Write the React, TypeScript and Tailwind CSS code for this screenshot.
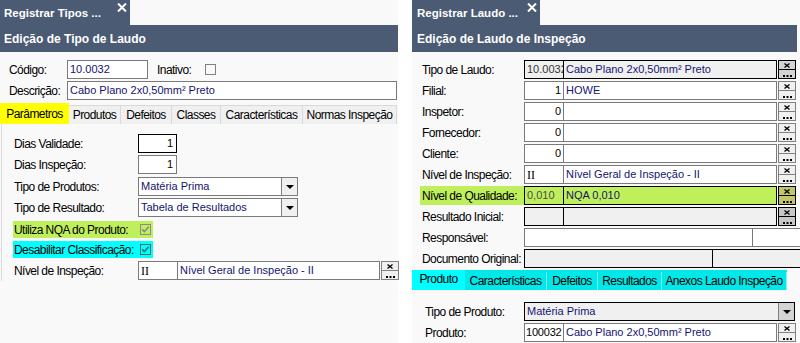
import React from "react";

const LBL = "font-['Liberation_Sans',Arial,sans-serif] text-[12px] tracking-[-0.55px] leading-none text-black whitespace-nowrap";
const VAL = "font-['Liberation_Sans',Arial,sans-serif] text-[11px] leading-none whitespace-nowrap";
const NAVY = "text-[#14146e]";

const CloseX = () => (
  <svg width="10" height="9" viewBox="0 0 10 9" className="mt-[3px] ml-auto mr-[3px] shrink-0">
    <path d="M1 0.5L9 8.5M9 0.5L1 8.5" stroke="#fff" strokeWidth="2" />
  </svg>
);

type BtnProps = { bg?: string; border?: string };

const XBtn = ({ bg = "bg-[#f0f0f0]", border = "border-[#808080]" }: BtnProps) => (
  <div className={`ml-px h-[19px] w-[18px] shrink-0 flex flex-col border ${border} ${bg}`}>
    <div className={`h-[9px] flex items-center justify-center border-b ${border}`}>
      <svg width="6" height="5" viewBox="0 0 6 5">
        <path d="M0.5 0.5L5.5 4.5M5.5 0.5L0.5 4.5" stroke="#000" strokeWidth="1.3" />
      </svg>
    </div>
    <div className="flex-1 flex items-end justify-center pb-[1px]">
      <svg width="9" height="2" viewBox="0 0 9 2">
        <rect x="0" y="0" width="2" height="2" fill="#000" />
        <rect x="3.5" y="0" width="2" height="2" fill="#000" />
        <rect x="7" y="0" width="2" height="2" fill="#000" />
      </svg>
    </div>
  </div>
);

const DropBtn = ({ bg = "bg-[#f0f0f0]" }: { bg?: string }) => (
  <div className={`ml-auto h-full w-[16px] shrink-0 border-l border-[#808080] flex items-center justify-center ${bg}`}>
    <svg width="8" height="4" viewBox="0 0 8 4">
      <path d="M0 0H8L4 4Z" fill="#000" />
    </svg>
  </div>
);

type CheckProps = { checked?: boolean; border: string; mark?: string };

const Check = ({ checked, border, mark = "#808080" }: CheckProps) => (
  <div className={`w-[11px] h-[11px] shrink-0 border ${border} flex items-center justify-center`}>
    {checked && (
      <svg width="9" height="9" viewBox="0 0 9 9">
        <path d="M1.2 4.3L3.4 6.6L7.8 1.8" stroke={mark} strokeWidth="1.7" fill="none" />
      </svg>
    )}
  </div>
);

const LeftTabs = [
  { t: "Parâmetros", w: "w-[69px]" },
  { t: "Produtos", w: "w-[52px]" },
  { t: "Defeitos", w: "w-[51px]" },
  { t: "Classes", w: "w-[49px]" },
  { t: "Características", w: "w-[82px]" },
  { t: "Normas Inspeção", w: "w-[94px]" },
];

const RightTabs = [
  { t: "Produto", w: "w-[53px]" },
  { t: "Características", w: "w-[82px]" },
  { t: "Defeitos", w: "w-[51px]" },
  { t: "Resultados", w: "w-[64px]" },
  { t: "Anexos Laudo Inspeção", w: "w-[125px]" },
];

const LeftPanel = () => (
  <div className="w-[398px] h-full bg-[#f9f9f9] shrink-0">
    <div className="flex h-[25px]">
      <div className="w-[130px] bg-[#4b5b74] flex pl-[4px] text-white">
        <span className="mt-[8px] font-['Liberation_Sans',Arial,sans-serif] font-bold text-[11.5px] leading-none">Registrar Tipos ...</span>
        <CloseX />
      </div>
    </div>
    <div className="h-[27px] bg-[#4b5b74] flex items-center pl-[4px] text-white font-['Liberation_Sans',Arial,sans-serif] font-bold text-[12px]">
      Edição de Tipo de Laudo
    </div>

    <div className="pt-[8px] pl-[9px]">
      <div className="flex items-center h-[19px]">
        <span className={`${LBL} w-[58px] shrink-0`}>Código:</span>
        <div className={`w-[81px] h-[19px] border border-[#7a7a7a] bg-white flex items-center px-[2px] ${VAL} ${NAVY}`}>10.0032</div>
        <span className={`${LBL} ml-[9px] w-[48px] shrink-0`}>Inativo:</span>
        <Check border="border-[#808080]" />
      </div>
      <div className="flex items-center h-[19px] mt-[2px]">
        <span className={`${LBL} w-[58px] shrink-0`}>Descrição:</span>
        <div className={`w-[330px] h-[19px] border border-[#7a7a7a] bg-white flex items-center px-[2px] ${VAL} ${NAVY}`}>Cabo Plano 2x0,50mm² Preto</div>
      </div>
    </div>

    <div className="flex items-end h-[21px] mt-[3px]">
      {LeftTabs.map((tb, i) => (
        <div
          key={tb.t}
          className={`${tb.w} shrink-0 flex items-center justify-center ${LBL} ${
            i === 0 ? "h-[21px] bg-[#ffff00]" : "h-[19px] bg-[#f0f0f0] border-t border-r border-[#d9d9d9]"
          }`}
        >
          {tb.t}
        </div>
      ))}
    </div>

    <div className="ml-[1px] border-l border-[#dcdcdc] h-[157px] pt-[10px] pl-[12px]">
      <div className="flex items-center h-[19px]">
        <span className={`${LBL} w-[124px] shrink-0`}>Dias Validade:</span>
        <div className={`w-[39px] h-[19px] border border-black bg-white flex items-center justify-end px-[3px] ${VAL}`}>1</div>
      </div>
      <div className="flex items-center h-[19px] mt-[2px]">
        <span className={`${LBL} w-[124px] shrink-0`}>Dias Inspeção:</span>
        <div className={`w-[39px] h-[19px] border border-[#7a7a7a] bg-white flex items-center justify-end px-[3px] ${VAL}`}>1</div>
      </div>
      <div className="flex items-center h-[19px] mt-[3px]">
        <span className={`${LBL} w-[124px] shrink-0`}>Tipo de Produtos:</span>
        <div className={`w-[160px] h-[19px] border border-[#7a7a7a] bg-white flex items-center pl-[2px] ${VAL} ${NAVY}`}>
          Matéria Prima
          <DropBtn />
        </div>
      </div>
      <div className="flex items-center h-[19px] mt-[2px]">
        <span className={`${LBL} w-[124px] shrink-0`}>Tipo de Resultado:</span>
        <div className={`w-[160px] h-[19px] border border-[#7a7a7a] bg-white flex items-center pl-[2px] ${VAL} ${NAVY}`}>
          Tabela de Resultados
          <DropBtn />
        </div>
      </div>
      <div className="flex items-center w-[140px] h-[17px] mt-[4px] -ml-[1px] pl-[1px] pr-[2px] bg-[#bff05c]">
        <span className={LBL}>Utiliza NQA do Produto:</span>
        <div className="ml-auto"><Check checked border="border-[#8a8a8a]" mark="#8a8a8a" /></div>
      </div>
      <div className="flex items-center w-[140px] h-[17px] mt-[3px] -ml-[1px] pl-[1px] pr-[2px] bg-[#00ffff]">
        <span className={LBL}>Desabilitar Classificação:</span>
        <div className="ml-auto"><Check checked border="border-[#3a6a6a]" mark="#1f7f7f" /></div>
      </div>
      <div className="flex items-center h-[19px] mt-[3px]">
        <span className={`${LBL} w-[124px] shrink-0`}>Nível de Inspeção:</span>
        <div className="w-[40px] h-[19px] shrink-0 border border-[#7a7a7a] bg-white flex items-center px-[2px] font-['Liberation_Serif',serif] text-[12px] leading-none">II</div>
        <div className={`w-[202px] h-[19px] shrink-0 border border-l-0 border-[#7a7a7a] bg-white flex items-center px-[2px] ${VAL} ${NAVY}`}>Nível Geral de Inspeção - II</div>
        <XBtn />
      </div>
    </div>
  </div>
);

type RowProps = { label: string; children: React.ReactNode; className?: string; labelBg?: string };

const Row = ({ label, children, className = "mt-[2px]", labelBg = "" }: RowProps) => (
  <div className={`flex items-center h-[19px] ${className}`}>
    <div className={`w-[104px] shrink-0 h-[19px] -ml-[2px] pl-[2px] flex items-center ${labelBg}`}>
      <span className={LBL}>{label}</span>
    </div>
    {children}
  </div>
);

type BoxProps = { w: string; cls?: string; children?: React.ReactNode; right?: boolean; first?: boolean };

const Box = ({ w, cls = "bg-white border-[#7a7a7a]", children, right, first }: BoxProps) => (
  <div className={`${w} h-[19px] shrink-0 border ${first ? "" : "border-l-0"} ${cls} flex items-center px-[2px] overflow-hidden ${right ? "justify-end" : ""} ${VAL}`}>
    {children}
  </div>
);

const RightPanel = () => (
  <div className="w-[388px] h-full bg-[#f9f9f9] shrink-0 overflow-hidden">
    <div className="flex h-[25px]">
      <div className="w-[128px] bg-[#4b5b74] flex pl-[5px] text-white">
        <span className="mt-[8px] font-['Liberation_Sans',Arial,sans-serif] font-bold text-[11.5px] leading-none">Registrar Laudo ...</span>
        <CloseX />
      </div>
    </div>
    <div className="h-[27px] w-[385px] bg-[#4b5b74] flex items-center pl-[5px] text-white font-['Liberation_Sans',Arial,sans-serif] font-bold text-[12px]">
      Edição de Laudo de Inspeção
    </div>

    <div className="pt-[8px] pl-[10px]">
      <Row label="Tipo de Laudo:" className="">
        <Box w="w-[40px]" first cls="bg-[#f0f0f0] border-black text-[#333]">10.0032</Box>
        <Box w="w-[213px]" cls={`bg-[#f0f0f0] border-black ${NAVY}`}>Cabo Plano 2x0,50mm² Preto</Box>
        <XBtn bg="bg-[#d4d4d4]" border="border-black" />
      </Row>
      <Row label="Filial:">
        <Box w="w-[40px]" first right>1</Box>
        <Box w="w-[213px]" cls={`bg-white border-[#7a7a7a] ${NAVY}`}>HOWE</Box>
        <XBtn />
      </Row>
      <Row label="Inspetor:">
        <Box w="w-[40px]" first right>0</Box>
        <Box w="w-[213px]" />
        <XBtn />
      </Row>
      <Row label="Fornecedor:">
        <Box w="w-[40px]" first right>0</Box>
        <Box w="w-[213px]" />
        <XBtn />
      </Row>
      <Row label="Cliente:">
        <Box w="w-[40px]" first right>0</Box>
        <Box w="w-[213px]" />
        <XBtn />
      </Row>
      <Row label="Nível de Inspeção:">
        <Box w="w-[40px]" first><span className="font-['Liberation_Serif',serif] text-[12px]">II</span></Box>
        <Box w="w-[213px]" cls={`bg-white border-[#7a7a7a] ${NAVY}`}>Nível Geral de Inspeção - II</Box>
        <XBtn />
      </Row>
      <Row label="Nível de Qualidade:" labelBg="bg-[#bff05c]">
        <Box w="w-[40px]" first cls="bg-[#bff05c] border-black text-[#4a4a4a]">0,010</Box>
        <Box w="w-[213px]" cls={`bg-[#bff05c] border-black ${NAVY}`}>NQA 0,010</Box>
        <XBtn bg="bg-[#c4c46a]" border="border-black" />
      </Row>
      <Row label="Resultado Inicial:">
        <Box w="w-[40px]" first cls="bg-[#f0f0f0] border-black" />
        <Box w="w-[213px]" cls="bg-[#f0f0f0] border-black" />
        <XBtn bg="bg-[#c8c8c8]" border="border-black" />
      </Row>
      <Row label="Responsável:">
        <Box w="w-[229px]" first />
        <Box w="w-[60px]" />
      </Row>
      <Row label="Documento Original:">
        <Box w="w-[189px]" first cls="bg-[#f0f0f0] border-black" />
        <Box w="w-[90px]" cls="bg-[#f0f0f0] border-black" />
      </Row>
    </div>

    <div className="flex items-end h-[20px] mt-[2px] w-[375px] bg-[#00e8e8]">
      {RightTabs.map((tb, i) => (
        <div
          key={tb.t}
          className={`${tb.w} shrink-0 flex items-center justify-center ${LBL} ${
            i === 0 ? "h-[20px] bg-[#00ffff] pb-[2px]" : "h-[18px] border-r border-[#7ff4f4]"
          }`}
        >
          {tb.t}
        </div>
      ))}
    </div>

    <div className="pt-[12px] pl-[13px]">
      <div className="flex items-center h-[19px]">
        <span className={`${LBL} w-[99px] shrink-0`}>Tipo de Produto:</span>
        <div className={`w-[271px] h-[19px] shrink-0 border border-black bg-[#f0f0f0] flex items-center pl-[2px] ${VAL} ${NAVY}`}>
          Matéria Prima
          <DropBtn bg="bg-[#d4d4d4]" />
        </div>
      </div>
      <div className="flex items-center h-[19px] mt-[2px]">
        <span className={`${LBL} w-[99px] shrink-0`}>Produto:</span>
        <div className={`w-[40px] h-[19px] shrink-0 border border-[#7a7a7a] bg-white flex items-center pl-[1px] overflow-hidden ${VAL} tracking-[-0.2px]`}>100032</div>
        <Box w="w-[213px]" cls={`bg-white border-[#7a7a7a] ${NAVY}`}>Cabo Plano 2x0,50mm² Preto</Box>
        <XBtn />
      </div>
    </div>
  </div>
);

export default function App() {
  return (
    <div className="w-[800px] h-[343px] bg-white flex gap-[14px] overflow-hidden">
      <LeftPanel />
      <RightPanel />
    </div>
  );
}
